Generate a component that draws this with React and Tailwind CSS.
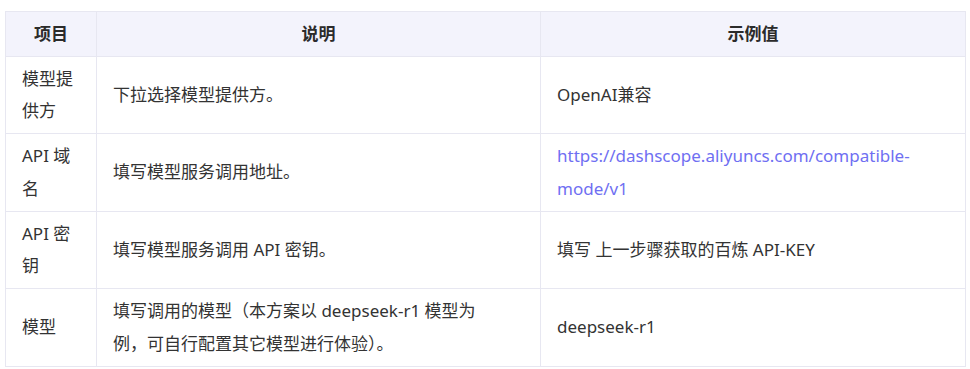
const rows = [
  {
    item: '模型提供方',
    desc: '下拉选择模型提供方。',
    value: 'OpenAI兼容',
  },
  {
    item: 'API 域名',
    desc: '填写模型服务调用地址。',
    value: (
      <a href="#" className="text-[#6f6ff2] no-underline">
        https://dashscope.aliyuncs.com/compatible-
        <br />
        mode/v1
      </a>
    ),
  },
  {
    item: 'API 密钥',
    desc: '填写模型服务调用 API 密钥。',
    value: '填写 上一步骤获取的百炼 API-KEY',
  },
  {
    item: '模型',
    desc: (
      <>
        填写调用的模型（本方案以 deepseek-r1 模型为
        <br />
        例，可自行配置其它模型进行体验）。
      </>
    ),
    value: 'deepseek-r1',
  },
]

const cell = 'border border-[#e7e7f1] px-4 py-[6px] align-middle'

export default function App() {
  return (
    <div
      className="bg-white pl-[5px] pt-[10.5px] text-[17px] leading-[32.25px] text-[#333]"
      style={{ fontFamily: '"Noto Sans", "Noto Sans CJK SC", sans-serif' }}
    >
      <table className="table-fixed border-collapse" style={{ width: 961 }}>
        <colgroup>
          <col className="w-[91px]" />
          <col className="w-[444px]" />
          <col />
        </colgroup>
        <thead>
          <tr className="bg-[#f3f3fc]">
            <th className={`${cell} text-center font-bold text-[#2b2b2b]`}>项目</th>
            <th className={`${cell} text-center font-bold text-[#2b2b2b]`}>说明</th>
            <th className={`${cell} text-center font-bold text-[#2b2b2b]`}>示例值</th>
          </tr>
        </thead>
        <tbody>
          {rows.map((row, i) => (
            <tr key={i}>
              <td className={cell}>{row.item}</td>
              <td className={cell}>{row.desc}</td>
              <td className={cell}>{row.value}</td>
            </tr>
          ))}
        </tbody>
      </table>
    </div>
  )
}
